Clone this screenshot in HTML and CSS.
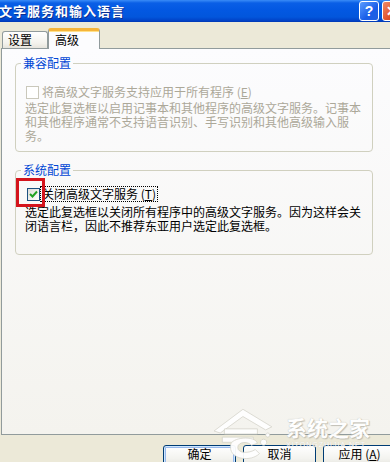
FILE: index.html
```html
<!DOCTYPE html>
<html lang="zh-CN">
<head>
<meta charset="utf-8">
<title>文字服务和输入语言</title>
<link rel="stylesheet" href="styles.css">
</head>
<body>
<div class="win">
  <div class="titlebar">
    <span class="title">文字服务和输入语言</span>
    <div class="tbtns">
      <span class="tbtn help">?</span>
      <span class="tbtn close">✕</span>
    </div>
  </div>
  <div class="client">
    <div class="tabs">
      <div class="tab">设置</div>
      <div class="tab active">高级</div>
    </div>
    <div class="panel">
      <fieldset class="group">
        <legend>兼容配置</legend>
        <div class="row disabled">
          <span class="cb"></span>
          <span class="label">将高级文字服务支持应用于所有程序 (<u>E</u>)</span>
        </div>
        <p class="desc disabled">选定此复选框以启用记事本和其他程序的高级文字服务。记事本<br>和其他程序通常不支持语音识别、手写识别和其他高级输入服<br>务。</p>
      </fieldset>
      <fieldset class="group group2">
        <legend>系统配置</legend>
        <div class="row">
          <span class="cb checked">
            <svg width="9" height="9" viewBox="0 0 9 9"><path d="M1 4 L3.5 6.5 L8 1.5" fill="none" stroke="#21a121" stroke-width="2"/></svg>
            <span class="mark"></span>
          </span>
          <span class="label focus">关闭高级文字服务 (<u>T</u>)</span>
        </div>
        <p class="desc">选定此复选框以关闭所有程序中的高级文字服务。因为这样会关<br>闭语言栏，因此不推荐东亚用户选定此复选框。</p>
      </fieldset>
    </div>
    <div class="buttons">
      <button class="btn default">确定</button>
      <button class="btn">取消</button>
      <button class="btn">应用 (<u>A</u>)</button>
    </div>
  </div>
  <div class="watermark">
    <svg class="wm-logo" width="66" height="54" viewBox="0 0 64 52">
      <g fill="#ffffff" stroke="#d0cec4" stroke-width="0.7">
        <path d="M2 24 L30 3 L58 20 L52 23 L30 10 L8 26 Z"/>
        <path d="M12 22 H44 V27 H12 Z"/>
        <path d="M10 30 H40 V35 H10 Z"/>
        <path d="M18 38 C18 30 42 28 44 36 L38 38 C36 34 25 34 25 40 C25 46 36 46 42 42 L46 46 C38 54 18 52 18 40 Z"/>
        <path d="M50 32 a3 3 0 1 0 0.1 0 Z"/>
        <path d="M54 26 a2 2 0 1 0 0.1 0 Z"/>
      </g>
    </svg>
    <div class="wm-text">
      <span class="wm-big">系统之家</span>
      <span class="wm-small">XITONGZHIJIA.NET</span>
    </div>
  </div>
</div>
</body>
</html>
```
FILE: styles.css
```css
* { box-sizing: border-box; }
html, body { margin: 0; padding: 0; }
body {
  width: 390px;
  height: 462px;
  overflow: hidden;
  background: #ece9d8;
  font-family: "Noto Sans CJK SC", "Liberation Sans", sans-serif;
  font-size: 12px;
  color: #000;
}
.win {
  position: relative;
  width: 390px;
  height: 462px;
  overflow: hidden;
}
.titlebar {
  height: 22px;
  display: flex;
  align-items: center;
  justify-content: space-between;
  background: linear-gradient(to bottom, #3a8cf7 0px, #0a5fe6 3px, #0358e2 10px, #0256dc 17px, #0140c4 21px, #0036b0 22px);
}
.title {
  color: #fff;
  font-weight: bold;
  font-size: 13px;
  letter-spacing: 1px;
  line-height: 22px;
  margin-left: -1px;
  text-shadow: 1px 1px 0 #0a2e90;
}
.tbtns {
  display: flex;
  gap: 3px;
  margin-right: -12px;
  align-self: flex-start;
  margin-top: 1px;
}
.tbtn {
  width: 20px;
  height: 20px;
  border: 1px solid #fff;
  border-radius: 3px;
  color: #fff;
  font-weight: bold;
  font-family: "Liberation Sans", sans-serif;
  font-size: 14px;
  display: flex;
  align-items: center;
  justify-content: center;
}
.help { background: linear-gradient(135deg, #5a9cff, #1a5ee8 60%, #2260e0); }
.close { background: linear-gradient(135deg, #f08a68, #e0502a 60%, #c83c18); }

.client { padding-left: 1px; }
.tabs {
  height: 26px;
  display: flex;
  align-items: flex-end;
  padding-left: 1px;
  position: relative;
  z-index: 2;
}
.tab {
  height: 17px;
  width: 46px;
  border: 1px solid #919b9c;
  border-bottom: none;
  border-radius: 3px 3px 0 0;
  background: linear-gradient(to bottom, #ffffff, #f3f2ec 70%, #e6e4dc);
  padding-left: 5px;
  line-height: 16px;
}
.tab.active {
  height: 21px;
  width: 52px;
  margin-bottom: -1px;
  border-top: 3px solid #f5b43a;
  background: #fcfcfe;
  padding-left: 6px;
  line-height: 17px;
  box-shadow: inset 0 1px 0 #ffe08a;
}
.panel {
  height: 387px;
  border-top: 1px solid #919b9c;
  border-left: 1px solid #919b9c;
  border-bottom: 1px solid #919b9c;
  background: linear-gradient(to bottom, #fcfcfe, #f4f3ee);
  padding: 7px 0 0 13px;
  position: relative;
  z-index: 1;
}
.group {
  margin: 0;
  width: 358px;
  border: 1px solid #d0d0bf;
  border-radius: 4px;
  padding: 0 10px 8px 10px;
  min-width: 0;
}
.group legend {
  color: #0046d5;
  padding: 0 2px;
  margin-left: -5px;
  line-height: 14px;
  font-size: 12px;
}
.group2 {
  margin-top: 11px;
  padding-bottom: 21px;
}
.row {
  display: flex;
  align-items: center;
  height: 14px;
  margin-top: 15px;
  position: relative;
}
.group2 .row { margin-top: 10px; }
.cb {
  width: 13px;
  height: 13px;
  flex: none;
  border: 1px solid #1c5180;
  background: linear-gradient(135deg, #dcdcd7, #ffffff);
  position: relative;
  display: flex;
  align-items: center;
  justify-content: center;
}
.disabled .cb {
  border-color: #cac8bb;
  background: #fff;
}
.cb.checked { margin-left: 1px; }
.cb .mark {
  position: absolute;
  left: -12px;
  top: -11px;
  width: 29px;
  height: 29px;
  border: 3px solid #d4141c;
}
.label {
  margin-left: 3px;
  line-height: 14px;
  white-space: nowrap;
}
.label.focus {
  margin-left: 1px;
  outline: 1px dotted #000;
  padding: 0 1px;
}
.disabled { color: #aca899; }
.desc {
  margin: 2px 0 0 -1px;
  line-height: 14px;
  white-space: nowrap;
}
.group2 .desc { margin-top: 4px; }

.buttons {
  display: flex;
  gap: 7px;
  padding: 10px 0 0 162px;
}
.btn {
  width: 73px;
  height: 23px;
  flex: none;
  border: 1px solid #003c74;
  border-radius: 3px;
  background: linear-gradient(to bottom, #ffffff, #f3f3ef 60%, #e3e2da);
  font-family: "Noto Sans CJK SC", sans-serif;
  font-size: 12px;
  color: #000;
  padding: 0 0 5px 0;
  line-height: 14px;
}
.btn.default {
  box-shadow: inset 0 0 0 1px #cee7ff, inset 0 0 0 2px #98b8ea;
}

.watermark {
  position: absolute;
  left: 212px;
  top: 404px;
  display: flex;
  align-items: flex-start;
  gap: 8px;
  z-index: 5;
  opacity: 0.95;
}
.wm-logo { margin-top: 2px; }
.wm-text {
  display: flex;
  flex-direction: column;
  margin-top: 10px;
}
.wm-big {
  color: #ffffff;
  font-size: 21px;
  font-weight: bold;
  line-height: 26px;
  text-shadow: 0 0 1px #b5b3a8, 1px 1px 1px #c0beb4;
}
.wm-small {
  color: #ffffff;
  font-family: "Liberation Sans", sans-serif;
  font-size: 7px;
  line-height: 9px;
  letter-spacing: 1px;
  text-shadow: 0 0 1px #c8c6bc;
}
```
